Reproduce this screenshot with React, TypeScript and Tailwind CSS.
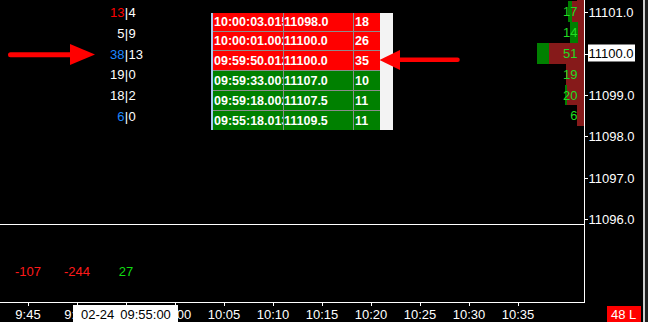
import React from "react";

const ladder = [
  { l: "13", lc: "text-[#ff0000]", r: "4" },
  { l: "5", lc: "text-white", r: "9" },
  { l: "38", lc: "text-[#1e88ff]", r: "13" },
  { l: "19", lc: "text-white", r: "0" },
  { l: "18", lc: "text-white", r: "2" },
  { l: "6", lc: "text-[#1e88ff]", r: "0" },
];

const tableRows = [
  { t: "10:00:03.015", p: "11098.0", q: "18", bg: "bg-[#ff0000]", h: "h-[19px] border-b" },
  { t: "10:00:01.002", p: "11100.0", q: "26", bg: "bg-[#ff0000]", h: "h-[19px] border-b" },
  { t: "09:59:50.012", p: "11100.0", q: "35", bg: "bg-[#ff0000]", h: "h-[20px] border-b" },
  { t: "09:59:33.001", p: "11107.0", q: "10", bg: "bg-[#008000]", h: "h-[20px] border-b" },
  { t: "09:59:18.002", p: "11107.5", q: "11", bg: "bg-[#008000]", h: "h-[20px] border-b" },
  { t: "09:55:18.013", p: "11109.5", q: "11", bg: "bg-[#008000]", h: "h-[19px]" },
];

const profile = [
  { v: "17", g: "w-[4px]", r: "w-[12px]" },
  { v: "14", g: "w-[8px]", r: "w-[6px]" },
  { v: "51", g: "w-[12px]", r: "w-[35px]" },
  { v: "19", g: "w-0", r: "w-[18px]" },
  { v: "20", g: "w-[2px]", r: "w-[17.5px]" },
  { v: "6", g: "w-0", r: "w-[7px]" },
];

const prices = ["11101.0", "11100.0", "11099.0", "11098.0", "11097.0", "11096.0"];

const times = ["9:45", "9:50", "9:55", "10:00", "10:05", "10:10", "10:15", "10:20", "10:25", "10:30", "10:35"];

const deltas = [
  { v: "-107", c: "text-[#ff1a1a]" },
  { v: "-244", c: "text-[#ff1a1a]" },
  { v: "27", c: "text-[#11dd11]" },
];

function PricePanel() {
  return (
    <div className="relative h-[224px] w-full overflow-hidden flex items-start">
      {/* ladder */}
      <div className="ml-[84.5px] pt-[2.45px] flex flex-col shrink-0">
        {ladder.map((row, i) => (
          <div key={i} className="h-[20.7px] flex items-center">
            <div className={`w-[40px] text-right ${row.lc}`}>{row.l}</div>
            <div className="w-[4px] text-center text-white">|</div>
            <div className="w-[22px] text-white">{row.r}</div>
          </div>
        ))}
      </div>

      {/* time & sales table */}
      <div className="ml-[60.5px] mt-[13px] flex shrink-0">
        <div className="w-[2px] bg-[#a6caf0]" />
        <div className="flex flex-col">
          {tableRows.map((r, i) => (
            <div key={i} className={`flex ${r.bg} ${r.h} border-[#8c8c8c] text-[12.5px] font-bold leading-[14px] text-white`}>
              <div className="w-[71px] border-r border-[#8c8c8c] overflow-hidden whitespace-nowrap flex items-center pl-[1px]">{r.t}</div>
              <div className="w-[70px] border-r border-[#8c8c8c] overflow-hidden whitespace-nowrap flex items-center">{r.p}</div>
              <div className="w-[26px] overflow-hidden whitespace-nowrap flex items-center pl-[1px]">{r.q}</div>
            </div>
          ))}
        </div>
        <div className="w-[13px] bg-[#f3f3f3]" />
      </div>

      {/* volume profile */}
      <div className="ml-auto w-[47px] flex flex-col shrink-0">
        <div className="h-[1px] flex justify-end">
          <div className="w-[7px] bg-[#861a1a]" />
        </div>
        {profile.map((p, i) => (
          <div key={i} className="relative h-[20.9px] flex justify-end">
            <div className={`${p.g} bg-[#008000]`} />
            <div className={`${p.r} bg-[#861a1a]`} />
            <div className="absolute right-[6.5px] top-0 h-full flex items-center text-[#22dd22]">{p.v}</div>
          </div>
        ))}
      </div>

      {/* arrows (overlays) */}
      <svg className="absolute left-0 top-[40px]" width="100" height="30" viewBox="0 0 100 30">
        <line x1="10.5" y1="14.8" x2="72" y2="14.8" stroke="#ff0000" strokeWidth="5" strokeLinecap="round" />
        <polygon points="70,4 95,14.6 70,25" fill="#ff0000" />
      </svg>
      <svg className="absolute left-[375px] top-[45px]" width="90" height="30" viewBox="0 0 90 30">
        <polygon points="4.5,15 25,5 25,25" fill="#ff0000" />
        <line x1="23" y1="14.8" x2="82.5" y2="14.8" stroke="#ff0000" strokeWidth="4.5" strokeLinecap="round" />
      </svg>
    </div>
  );
}

function Axis() {
  return (
    <div className="flex-1 flex flex-col">
      <div className="h-[224px] overflow-hidden">
        <div className="-mt-[7.9px] flex flex-col">
          {prices.map((p, i) => (
            <div key={i} className="h-[41.4px] flex items-center">
              <div className="w-[3px] h-px bg-white" />
              {i === 1 ? (
                <div className="w-[47px] h-[17px] bg-white text-black flex items-center pl-[0.5px] -translate-y-[1.5px]">{p}</div>
              ) : (
                <div className="pl-[0.5px] text-white">{p}</div>
              )}
            </div>
          ))}
        </div>
      </div>
    </div>
  );
}

export default function App() {
  return (
    <div className="w-[648px] h-[322px] bg-black flex overflow-hidden font-['Liberation_Sans',Arial,sans-serif] text-[13px] leading-[15px] text-white">
      <div className="w-[641px] flex flex-col shrink-0">
        <div className="h-[303px] flex">
          <div className="w-[585px] border-r border-white flex flex-col shrink-0">
            <PricePanel />
            <div className="h-px bg-white" />
            <div className="h-[77px] flex pl-[3.5px] pt-[39px]">
              {deltas.map((d, i) => (
                <div key={i} className={`w-[49px] shrink-0 text-center ${d.c}`}>{d.v}</div>
              ))}
            </div>
            <div className="h-px bg-white" />
          </div>
          <Axis />
        </div>
        <div className="h-[19px] flex">
          <div className="relative w-[585px] flex pl-[3.5px] shrink-0">
            {times.map((t, i) => (
              <div key={i} className="w-[49px] shrink-0 flex flex-col items-center">
                <div className="w-px h-[3px] bg-white" />
                <div className="mt-px whitespace-nowrap text-white">{t}</div>
              </div>
            ))}
            <div className="absolute left-[73px] top-[2px] w-[105px] h-[17px] bg-white text-black flex gap-[6px] pl-[8px] pt-[2px] whitespace-nowrap">
              <span>02-24</span>
              <span>09:55:00</span>
            </div>
          </div>
          <div className="ml-auto self-end w-[34px] h-[16px] bg-[#ff0000] text-white pl-[4px] flex items-center whitespace-nowrap">48 L</div>
        </div>
      </div>
      <div className="w-[2px] shrink-0" />
      <div className="w-[2px] shrink-0 bg-[#cfcfcf]" />
      <div className="flex-1 bg-[#202020]" />
    </div>
  );
}
